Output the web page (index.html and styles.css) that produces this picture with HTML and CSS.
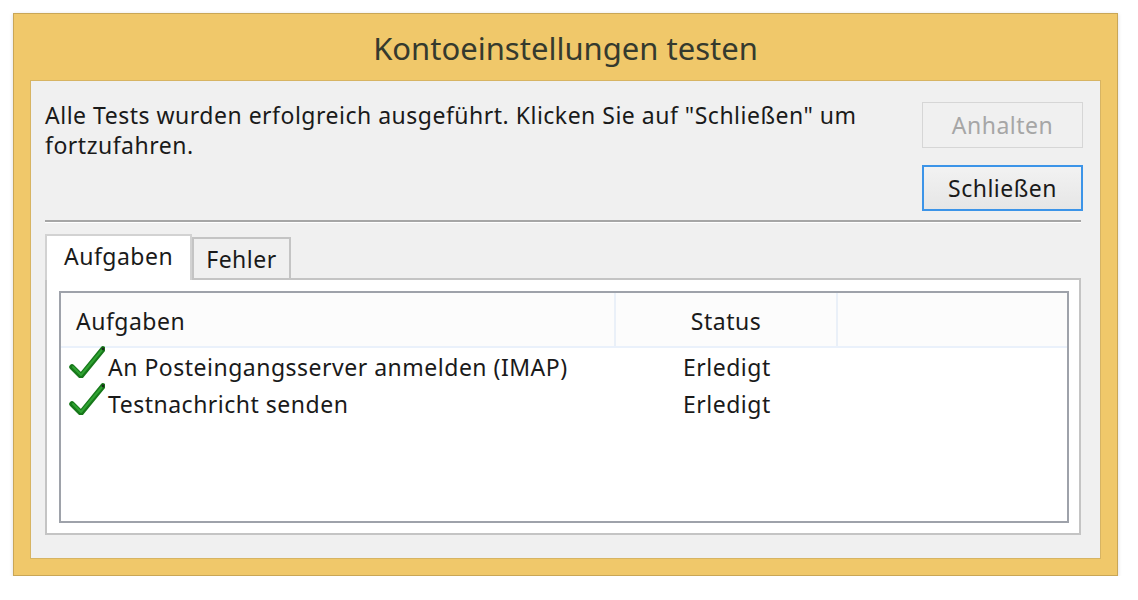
FILE: index.html
```html
<!DOCTYPE html>
<html lang="de">
<head>
    <meta charset="UTF-8">
    <title>Kontoeinstellungen testen</title>
    <link rel="stylesheet" href="styles.css">
</head>
<body>
    <div class="window">
        <div class="titlebar">Kontoeinstellungen testen</div>
        <div class="client">
            <div class="top">
                <p class="message">Alle Tests wurden erfolgreich ausgeführt. Klicken Sie auf "Schließen" um fortzufahren.</p>
                <div class="buttons">
                    <button class="btn" disabled>Anhalten</button>
                    <button class="btn default">Schließen</button>
                </div>
            </div>

            <div class="separator"></div>

            <div class="tabs">
                <div class="tab active">Aufgaben</div>
                <div class="tab">Fehler</div>
            </div>

            <div class="tab-panel">
                <div class="list">
                    <div class="list-head">
                        <div class="col col-task">Aufgaben</div>
                        <div class="col col-status">Status</div>
                        <div class="col col-rest"></div>
                    </div>
                    <div class="row">
                        <div class="col col-task">
                            <svg class="check" viewBox="0 0 36 32" width="36" height="32">
                                <path d="M3 21 L12 30 L34 3" fill="none" stroke="#17781a" stroke-width="5.5" stroke-linecap="round" stroke-linejoin="round"/>
                                <path d="M4 21 L12 29 L33 4" fill="none" stroke="#2fa332" stroke-width="2" stroke-linecap="round" stroke-linejoin="round"/>
                                <circle cx="34" cy="3" r="1.4" fill="#1a2a1a"/>
                            </svg>
                            An Posteingangsserver anmelden (IMAP)
                        </div>
                        <div class="col col-status">Erledigt</div>
                    </div>
                    <div class="row">
                        <div class="col col-task">
                            <svg class="check" viewBox="0 0 36 32" width="36" height="32">
                                <path d="M3 21 L12 30 L34 3" fill="none" stroke="#17781a" stroke-width="5.5" stroke-linecap="round" stroke-linejoin="round"/>
                                <path d="M4 21 L12 29 L33 4" fill="none" stroke="#2fa332" stroke-width="2" stroke-linecap="round" stroke-linejoin="round"/>
                                <circle cx="34" cy="3" r="1.4" fill="#1a2a1a"/>
                            </svg>
                            Testnachricht senden
                        </div>
                        <div class="col col-status">Erledigt</div>
                    </div>
                </div>
            </div>
        </div>
    </div>
</body>
</html>
```

FILE: styles.css
```css
* {
    margin: 0;
    padding: 0;
    box-sizing: border-box;
}

body {
    font-family: 'Noto Sans', 'Open Sans', sans-serif;
    font-size: 23px;
    letter-spacing: 0.5px;
    background: #ffffff;
    color: #1a1a1a;
    padding: 13px 0 0 13px;
}

.window {
    width: 1105px;
    height: 563px;
    background: #f0c86a;
    border: 1px solid #c9a656;
    box-shadow: 0 1px 4px rgba(0,0,0,0.15);
    padding: 0 16px 16px 16px;
    display: flex;
    flex-direction: column;
}

.titlebar {
    height: 66px;
    display: flex;
    align-items: center;
    justify-content: center;
    font-size: 31px;
    letter-spacing: 0;
    color: #353a2e;
    padding-top: 1px;
}

.client {
    flex: 1;
    background: #f0f0f0;
    border: 1px solid #d7b463;
    padding: 21px 17px 23px 14px;
    display: flex;
    flex-direction: column;
}

.top {
    display: flex;
    justify-content: space-between;
    height: 118px;
}

.message {
    line-height: 30px;
    width: 850px;
    margin-top: -2px;
}

.buttons {
    display: flex;
    flex-direction: column;
    gap: 17px;
}

.btn {
    width: 161px;
    height: 46px;
    font-family: inherit;
    font-size: 23px;
    letter-spacing: 0.5px;
    color: #1a1a1a;
    background: linear-gradient(#f0f0f0, #e4e4e4);
    border: 1px solid #adadad;
}

.btn:disabled {
    color: #a6a6a6;
    background: #f0f0f0;
    border-color: #d6d6d6;
}

.btn.default {
    border: 2px solid #3c94e8;
    background: linear-gradient(#f2f2f2, #e6e6e6);
}

.separator {
    height: 2px;
    margin-right: 2px;
    border-top: 2px solid #a6a6a6;
    border-bottom: 1px solid #ffffff;
}

.tabs {
    display: flex;
    align-items: flex-end;
    margin-top: 9px;
    height: 46px;
}

.tab {
    padding: 0 12px;
    border: 2px solid #c4c4c4;
    border-bottom: none;
    background: #f0f0f0;
    height: 41px;
    display: flex;
    align-items: center;
}

.tab.active {
    background: #ffffff;
    height: 46px;
    padding: 0 17px 4px;
    margin-bottom: -2px;
    position: relative;
    z-index: 1;
    border-color: #d2d2d2;
}

.tab-panel {
    flex: 1;
    background: #ffffff;
    border: 2px solid #c4c4c4;
    margin-right: 2px;
    padding: 11px 10px 10px 12px;
    display: flex;
}

.list {
    flex: 1;
    border: 2px solid #9ea2aa;
    background: #ffffff;
}

.list-head {
    display: flex;
    height: 55px;
    background: #fcfcfc;
    border-bottom: 2px solid #eaf1fb;
}

.list-head .col {
    display: flex;
    align-items: center;
    padding-top: 3px;
}

.col-task {
    width: 555px;
    padding-left: 15px;
    display: flex;
    align-items: center;
}

.col-status {
    width: 222px;
}

.list-head .col-task {
    border-right: 2px solid #eaf0f8;
}

.list-head .col-status {
    justify-content: center;
    border-right: 2px solid #eaf0f8;
}

.col-rest {
    flex: 1;
}

.row {
    display: flex;
    align-items: center;
    height: 37px;
}

.row:first-of-type {
    margin-top: 2px;
}

.row .col-task {
    padding-left: 8px;
}

.row .col-status {
    padding-left: 67px;
}

.check {
    margin-right: 3px;
    margin-top: -10px;
}
```
